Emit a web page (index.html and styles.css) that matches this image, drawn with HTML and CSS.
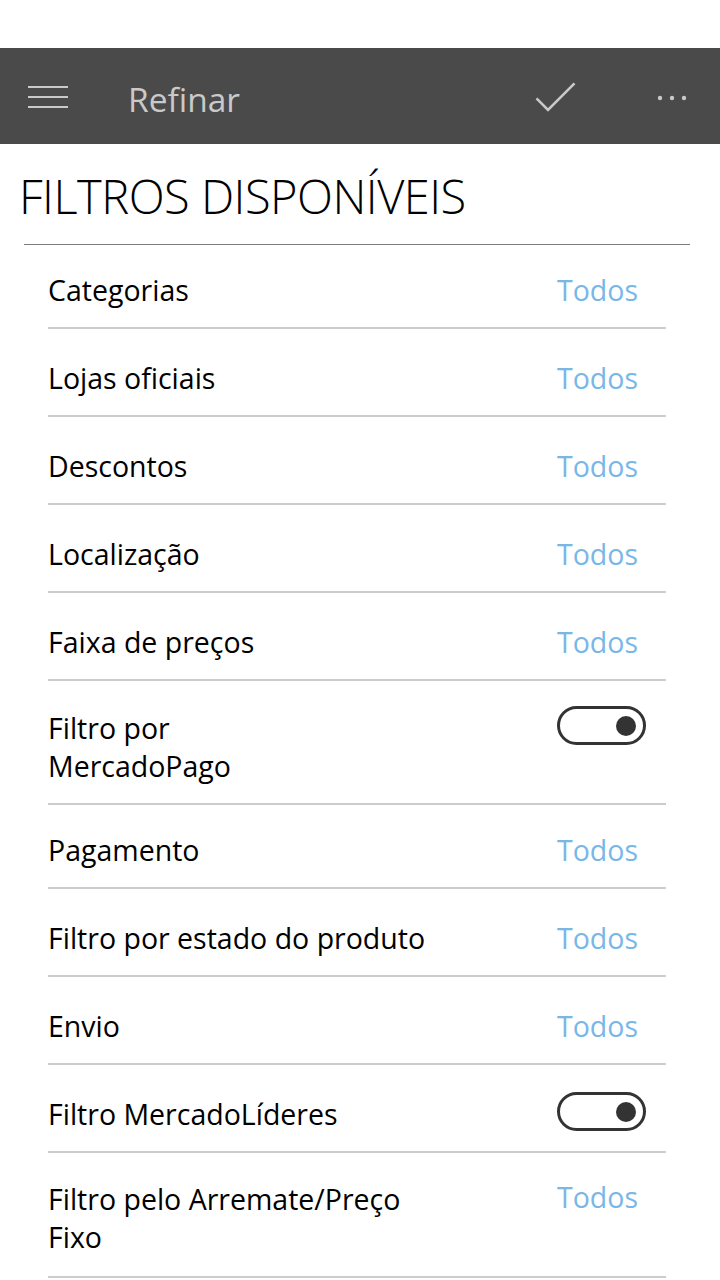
FILE: index.html
```html
<!DOCTYPE html>
<html lang="pt-BR">
<head>
<meta charset="utf-8">
<title>Refinar</title>
<link rel="stylesheet" href="styles.css">
</head>
<body>
<div class="status-strip"></div>
<header class="app-bar">
  <button class="icon-btn menu-btn" aria-label="Menu">
    <svg width="40" height="24" viewBox="0 0 40 24"><g stroke="#c9c9c9" stroke-width="2"><line x1="0" y1="2" x2="40" y2="2"/><line x1="0" y1="12" x2="40" y2="12"/><line x1="0" y1="22" x2="40" y2="22"/></g></svg>
  </button>
  <div class="app-title">Refinar</div>
  <button class="icon-btn check-btn" aria-label="Aplicar">
    <svg width="42" height="32" viewBox="0 0 42 32"><polyline points="1.5,16.3 13,28 39.5,1.3" fill="none" stroke="#c9c9c9" stroke-width="2.6"/></svg>
  </button>
  <button class="icon-btn more-btn" aria-label="Mais">
    <svg width="32" height="8" viewBox="0 0 32 8"><g fill="#c9c9c9"><circle cx="4" cy="4" r="2.2"/><circle cx="16" cy="4" r="2.2"/><circle cx="28" cy="4" r="2.2"/></g></svg>
  </button>
</header>
<main class="filters">
  <h1 class="filters-title">FILTROS DISPONÍVEIS</h1>
  <div class="rule"></div>
  <ul class="filter-list">
    <li class="filter-row is-tight"><span class="label">Categorias</span><span class="value">Todos</span></li>
    <li class="filter-row"><span class="label">Lojas oficiais</span><span class="value">Todos</span></li>
    <li class="filter-row"><span class="label">Descontos</span><span class="value">Todos</span></li>
    <li class="filter-row"><span class="label">Localização</span><span class="value">Todos</span></li>
    <li class="filter-row"><span class="label">Faixa de preços</span><span class="value">Todos</span></li>
    <li class="filter-row is-double has-toggle"><span class="label">Filtro por MercadoPago</span><span class="toggle"><span class="knob"></span></span></li>
    <li class="filter-row is-tight"><span class="label">Pagamento</span><span class="value">Todos</span></li>
    <li class="filter-row"><span class="label">Filtro por estado do produto</span><span class="value">Todos</span></li>
    <li class="filter-row"><span class="label">Envio</span><span class="value">Todos</span></li>
    <li class="filter-row has-toggle"><span class="label">Filtro MercadoLíderes</span><span class="toggle"><span class="knob"></span></span></li>
    <li class="filter-row is-last"><span class="label">Filtro pelo Arremate/Preço Fixo</span><span class="value">Todos</span></li>
  </ul>
</main>
</body>
</html>
```
FILE: styles.css
```css
* { box-sizing: border-box; }
html, body { margin: 0; padding: 0; background: #ffffff; }
body {
  font-family: "Open Sans", "Noto Sans", "DejaVu Sans", sans-serif;
  color: #000;
  width: 720px;
  overflow: hidden;
}
.status-strip { height: 48px; background: #ffffff; }
.app-bar {
  height: 96px;
  background: #4a4a4a;
  display: flex;
  align-items: center;
}
.icon-btn {
  background: none;
  border: 0;
  padding: 0;
  margin: 0;
  display: flex;
  align-items: center;
  justify-content: center;
}
.menu-btn { margin-left: 28px; margin-top: 1px; }
.app-title {
  margin-left: 60px;
  font-size: 33.5px;
  color: #c9c9c9;
  line-height: 40px;
  margin-top: 5px;
}
.check-btn { margin-left: auto; margin-top: 3px; }
.more-btn { margin-left: 79px; margin-right: 32px; margin-top: 4px; }

.filters { padding: 0; }
.filters-title {
  margin: 22px 0 18px 0;
  padding-left: 19px;
  font-size: 47px;
  font-weight: 300;
  line-height: 60px;
  letter-spacing: -0.5px;
  color: #000;
}
.rule { height: 1px; background: #7d7d7d; margin: 0 30px 0 24px; }
.filter-list { list-style: none; margin: 0 54px 0 48px; padding: 0; }
.filter-row {
  display: grid;
  grid-template-columns: 1fr 109px;
  align-items: start;
  padding: 30px 0 18px 0;
  border-bottom: 2px solid #cccccc;
  font-size: 28.5px;
  line-height: 38px;
}
.filter-row.is-tight { padding-top: 26px; }
.filter-row.is-double { padding-top: 28px; }
.filter-row.is-last { padding-top: 27px; padding-bottom: 20px; }
.label { max-width: 400px; }
.has-toggle .label { max-width: 300px; }
.value { color: #79b7e7; }
.is-last .value { margin-top: -2px; }
.toggle {
  width: 89px;
  height: 39px;
  border: 3px solid #333333;
  border-radius: 20px;
  display: flex;
  align-items: center;
  justify-content: flex-end;
  padding-right: 7px;
  margin-top: -3px;
}
.knob {
  width: 20px;
  height: 20px;
  border-radius: 50%;
  background: #333333;
}
```
